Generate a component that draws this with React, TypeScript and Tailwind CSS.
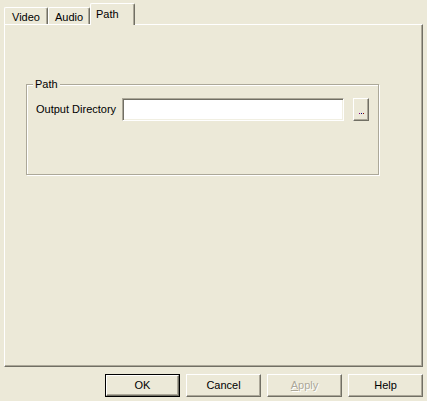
import React from "react";

const font = { fontFamily: "Tahoma, 'Liberation Sans', Arial, sans-serif" };

function Tab({ label, selected, w }: { label: string; selected?: boolean; w: string }) {
  if (selected) {
    return (
      <div className={`relative z-10 ${w} h-[22px] border-t border-l border-white border-r border-r-[#716F64] shadow-[inset_-1px_0_0_#ACA899] bg-[#ECE9D8] rounded-tl-[2px] rounded-tr-[2px] flex justify-start pl-[5px] pt-[3px] text-[11px] leading-[14px] text-black`}>
        {label}
      </div>
    );
  }
  return (
    <div className={`${w} h-[18px] border-t border-l border-white border-r border-r-[#716F64] shadow-[inset_-1px_0_0_#ACA899] rounded-tl-[2px] rounded-tr-[2px] flex justify-center pt-[2px] text-[11px] leading-[14px] text-black`}>
      {label}
    </div>
  );
}

function Btn({ children, def, disabled }: { children: React.ReactNode; def?: boolean; disabled?: boolean }) {
  const inner = (
    <div
      className={`h-full w-full border-t border-l border-white border-r border-b border-r-[#716F64] border-b-[#716F64] shadow-[inset_-1px_-1px_0_#ACA899] flex items-center justify-center text-[11px] ${
        disabled ? "text-[#ACA899] [text-shadow:1px_1px_0_#fff]" : "text-black"
      }`}
    >
      {children}
    </div>
  );
  if (def) {
    return <div className="w-[75px] h-[23px] border border-black">{inner}</div>;
  }
  return <div className="w-[75px] h-[23px]">{inner}</div>;
}

export default function App() {
  return (
    <div className="w-[427px] h-[401px] bg-[#ECE9D8] overflow-hidden flex flex-col" style={font}>
      <div className="flex items-end h-[25px] pl-[4px] pt-[4px]">
        <Tab label="Video" w="w-[44px]" />
        <Tab label="Audio" w="w-[42px]" />
        <Tab label="Path" w="w-[45px]" selected />
      </div>
      <div className="ml-[4px] w-[419px] h-[343px] border-t border-l border-white border-r border-b border-r-[#716F64] border-b-[#716F64] shadow-[inset_-1px_-1px_0_#ACA899] -mt-[1px]">
        <div className="pt-[59px] pl-[21px]">
          <div className="relative w-[353px] h-[91px] border border-[#ACA899] shadow-[inset_1px_1px_0_#fff,1px_1px_0_#fff]">
            <span className="absolute -top-[8px] left-[6px] px-[2px] bg-[#ECE9D8] text-[11px] leading-[14px] text-black">
              Path
            </span>
            <div className="flex items-center mt-[13px] ml-[9px]">
              <span className="text-[11px] text-black w-[86px] whitespace-nowrap">Output Directory</span>
              <div className="w-[222px] h-[23px] border-t border-l border-[#ACA899] border-r border-b border-r-white border-b-white shadow-[inset_1px_1px_0_#716F64,inset_-1px_-1px_0_#F1EFE2] bg-white" />
              <div className="ml-[9px] w-[16px] h-[23px] border-t border-l border-white border-r border-b border-r-[#716F64] border-b-[#716F64] shadow-[inset_-1px_-1px_0_#ACA899] flex items-end justify-center pb-[6px]">
                <div className="flex gap-[1px]">
                  <span className="w-[1px] h-[1px] bg-[#800080]" />
                  <span className="w-[1px] h-[1px] bg-[#000080]" />
                  <span className="w-[1px] h-[1px] bg-[#800000]" />
                </div>
              </div>
            </div>
          </div>
        </div>
      </div>
      <div className="flex justify-end gap-[6px] pr-[4px] mt-[7px]">
        <Btn def>OK</Btn>
        <Btn>Cancel</Btn>
        <Btn disabled>
          <span>
            <span className="underline">A</span>pply
          </span>
        </Btn>
        <Btn>Help</Btn>
      </div>
    </div>
  );
}
